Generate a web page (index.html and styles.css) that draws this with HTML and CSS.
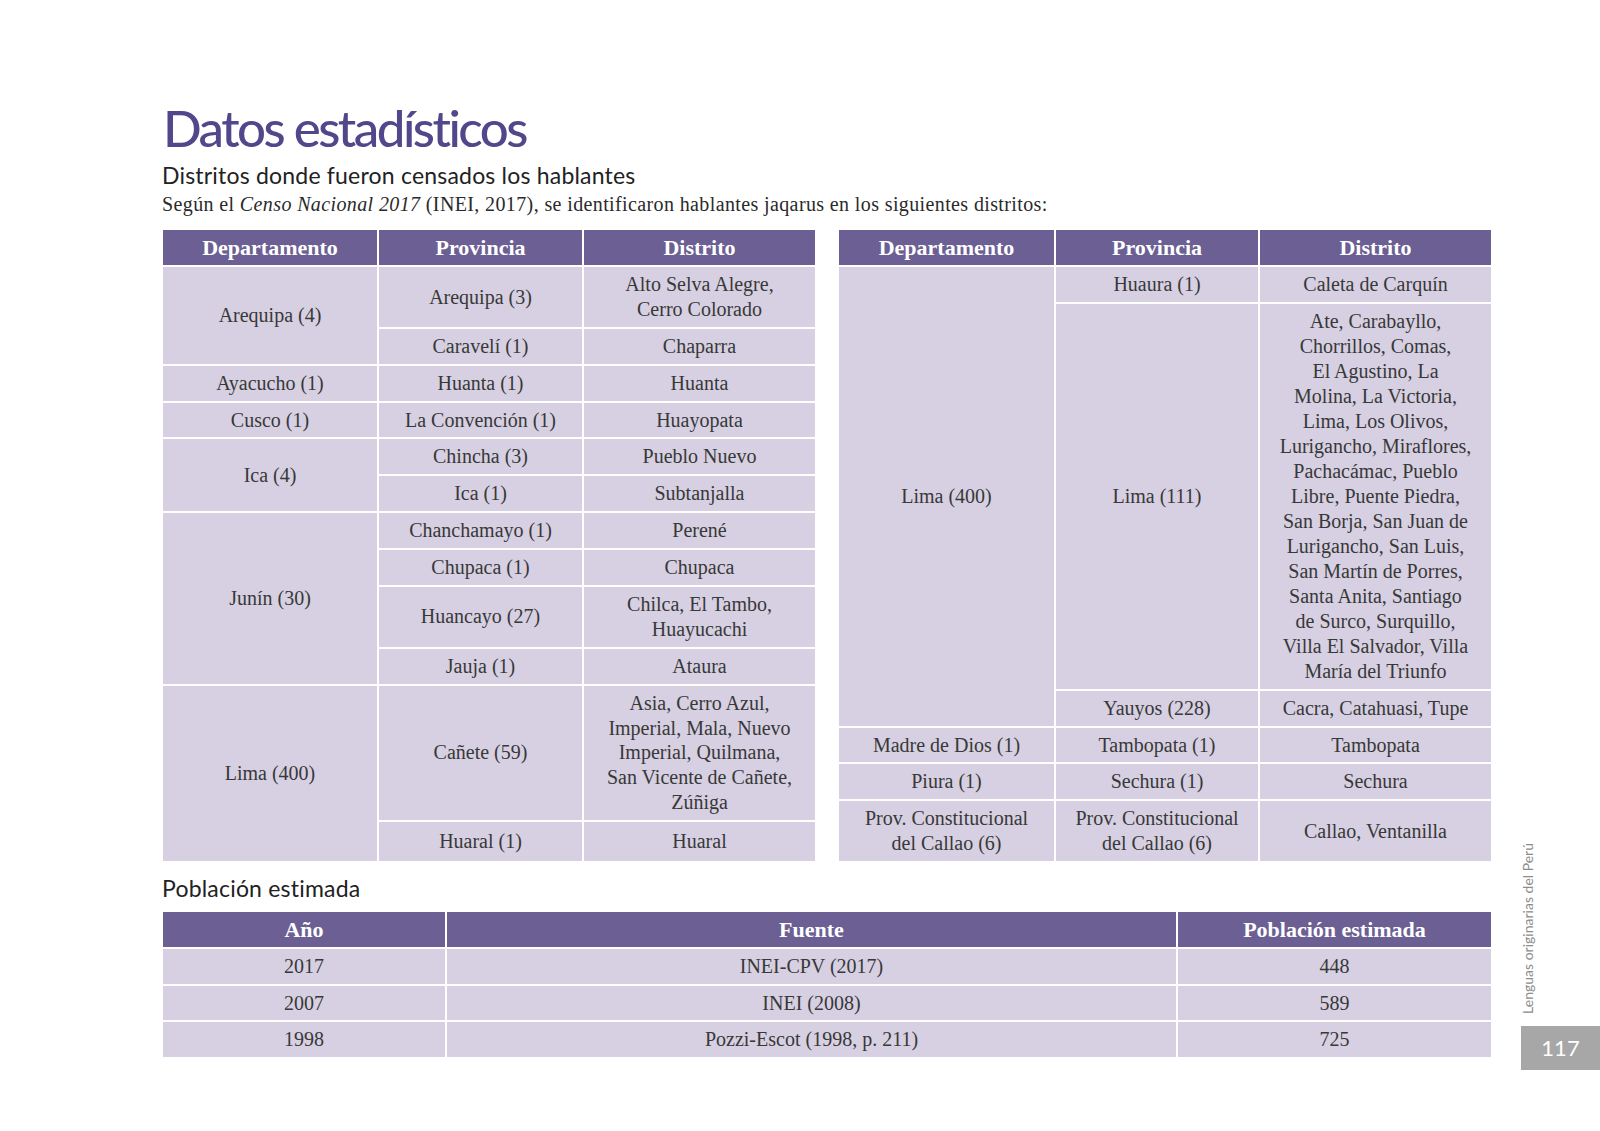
FILE: index.html
```html
<!DOCTYPE html>
<html lang="es">
<head>
    <meta charset="UTF-8">
    <meta name="viewport" content="width=device-width, initial-scale=1.0">
    <title>Datos estadísticos - Jaqaru</title>
    <link rel="stylesheet" href="styles.css">
</head>
<body>
<div class="page">
    <div class="content">
        <h1 class="title">Datos estadísticos</h1>
        <h2 class="subtitle">Distritos donde fueron censados los hablantes</h2>
        <p class="intro">Según el <em>Censo Nacional 2017</em> (INEI, 2017), se identificaron hablantes jaqarus en los siguientes distritos:</p>

        <!-- Distritos -->
        <div class="tables-row">
            <table class="data left">
                <colgroup>
                    <col class="c-dep-l"><col class="c-prov-l"><col class="c-dist">
                </colgroup>
                <thead>
                    <tr><th>Departamento</th><th>Provincia</th><th>Distrito</th></tr>
                </thead>
                <tbody>
                    <tr><td rowspan="2">Arequipa (4)</td><td>Arequipa (3)</td><td>Alto Selva Alegre,<br>Cerro Colorado</td></tr>
                    <tr><td>Caravelí (1)</td><td>Chaparra</td></tr>
                    <tr><td>Ayacucho (1)</td><td>Huanta (1)</td><td>Huanta</td></tr>
                    <tr><td>Cusco (1)</td><td>La Convención (1)</td><td>Huayopata</td></tr>
                    <tr><td rowspan="2">Ica (4)</td><td>Chincha (3)</td><td>Pueblo Nuevo</td></tr>
                    <tr><td>Ica (1)</td><td>Subtanjalla</td></tr>
                    <tr><td rowspan="4">Junín (30)</td><td>Chanchamayo (1)</td><td>Perené</td></tr>
                    <tr><td>Chupaca (1)</td><td>Chupaca</td></tr>
                    <tr><td>Huancayo (27)</td><td>Chilca, El Tambo,<br>Huayucachi</td></tr>
                    <tr><td>Jauja (1)</td><td>Ataura</td></tr>
                    <tr><td rowspan="2">Lima (400)</td><td>Cañete (59)</td><td>Asia, Cerro Azul,<br>Imperial, Mala, Nuevo<br>Imperial, Quilmana,<br>San Vicente de Cañete,<br>Zúñiga</td></tr>
                    <tr class="last-row"><td>Huaral (1)</td><td>Huaral</td></tr>
                </tbody>
            </table>

            <table class="data right">
                <colgroup>
                    <col class="c-dep-r"><col class="c-prov-r"><col class="c-dist">
                </colgroup>
                <thead>
                    <tr><th>Departamento</th><th>Provincia</th><th>Distrito</th></tr>
                </thead>
                <tbody>
                    <tr><td rowspan="3">Lima (400)</td><td>Huaura (1)</td><td>Caleta de Carquín</td></tr>
                    <tr><td>Lima (111)</td><td class="long-list">Ate, Carabayllo,<br>Chorrillos, Comas,<br>El Agustino, La<br>Molina, La Victoria,<br>Lima, Los Olivos,<br>Lurigancho, Miraflores,<br>Pachacámac, Pueblo<br>Libre, Puente Piedra,<br>San Borja, San Juan de<br>Lurigancho, San Luis,<br>San Martín de Porres,<br>Santa Anita, Santiago<br>de Surco, Surquillo,<br>Villa El Salvador, Villa<br>María del Triunfo</td></tr>
                    <tr><td>Yauyos (228)</td><td>Cacra, Catahuasi, Tupe</td></tr>
                    <tr><td>Madre de Dios (1)</td><td>Tambopata (1)</td><td>Tambopata</td></tr>
                    <tr><td>Piura (1)</td><td>Sechura (1)</td><td>Sechura</td></tr>
                    <tr><td>Prov. Constitucional<br>del Callao (6)</td><td>Prov. Constitucional<br>del Callao (6)</td><td>Callao, Ventanilla</td></tr>
                </tbody>
            </table>
        </div>

        <!-- Población -->
        <h2 class="subtitle pop-title">Población estimada</h2>
        <table class="data pop">
            <colgroup>
                <col class="c-year"><col class="c-source"><col class="c-count">
            </colgroup>
            <thead>
                <tr><th>Año</th><th>Fuente</th><th>Población estimada</th></tr>
            </thead>
            <tbody>
                <tr><td>2017</td><td>INEI-CPV (2017)</td><td>448</td></tr>
                <tr><td>2007</td><td>INEI (2008)</td><td>589</td></tr>
                <tr><td>1998</td><td>Pozzi-Escot (1998, p. 211)</td><td>725</td></tr>
            </tbody>
        </table>
    </div>

    <aside class="margin-note">
        <span class="book-name">Lenguas originarias del Perú</span>
        <div class="page-num">117</div>
    </aside>
</div>
</body>
</html>
```

FILE: styles.css
```css
/* Basic styling */
body {
    margin: 0;
    padding: 0;
    background-color: #fff;
    font-family: "Liberation Serif", "Times New Roman", serif;
    color: #383838;
}
.page {
    display: flex;
    width: 1600px;
}
.content {
    margin-left: 161px;
    width: 1332px;
    padding-top: 102px;
    padding-bottom: 11px;
}

/* Headings */
.title {
    margin: 0;
    font-family: Lato, "Open Sans", sans-serif;
    font-weight: 500;
    font-size: 51px;
    line-height: 51px;
    letter-spacing: -2.5px;
    color: #51478a;
    padding-left: 2px;
}
.subtitle {
    margin: 8px 0 0 1px;
    font-family: Lato, "Open Sans", sans-serif;
    font-weight: 400;
    font-size: 23px;
    line-height: 28px;
    letter-spacing: 0.2px;
    color: #222;
}
.intro {
    margin: 2px 0 0 1px;
    font-size: 20px;
    line-height: 26px;
    letter-spacing: 0.38px;
    color: #2a2a2a;
}

/* Table styling */
.tables-row {
    display: flex;
    gap: 20px;
    margin-top: 11px;
}
.data {
    border-collapse: separate;
    border-spacing: 2px;
    table-layout: fixed;
}
.data th, .data td {
    padding: 5px 4px;
    text-align: center;
    vertical-align: middle;
    white-space: nowrap;
}
.data th {
    background-color: #6b5f93;
    color: #fff;
    font-weight: bold;
    font-size: 22px;
    line-height: 25px;
}
.data td {
    background-color: #d6d0e2;
    font-size: 20px;
    line-height: 24.8px;
}
.left td {
    line-height: 24.7px;
}
.left .last-row td {
    padding-top: 7px;
    padding-bottom: 7px;
}
.right .long-list {
    line-height: 25px;
}
.left { width: 656px; }
.right { width: 656px; }
.c-dep-l { width: 214px; }
.c-prov-l { width: 203px; }
.c-dep-r { width: 215px; }
.c-prov-r { width: 202px; }
.c-dist { width: 231px; }

.pop-title {
    margin-top: 11px;
}
.pop {
    width: 1332px;
    margin-top: 8px;
}
.c-year { width: 282px; }
.c-source { width: 729px; }
.c-count { width: 313px; }

/* Page margin */
.margin-note {
    margin-left: auto;
    width: 79px;
    align-self: flex-end;
    display: flex;
    flex-direction: column;
    align-items: flex-start;
}
.book-name {
    writing-mode: vertical-rl;
    transform: rotate(180deg);
    font-family: Lato, "Open Sans", sans-serif;
    font-size: 14px;
    line-height: 14px;
    color: #8c8c8c;
    margin: 0 0 12px 0;
}
.page-num {
    width: 79px;
    height: 44px;
    background-color: #a7a7a7;
    color: #fff;
    font-family: Lato, "Open Sans", sans-serif;
    font-size: 22px;
    line-height: 44px;
    text-align: center;
}
```
